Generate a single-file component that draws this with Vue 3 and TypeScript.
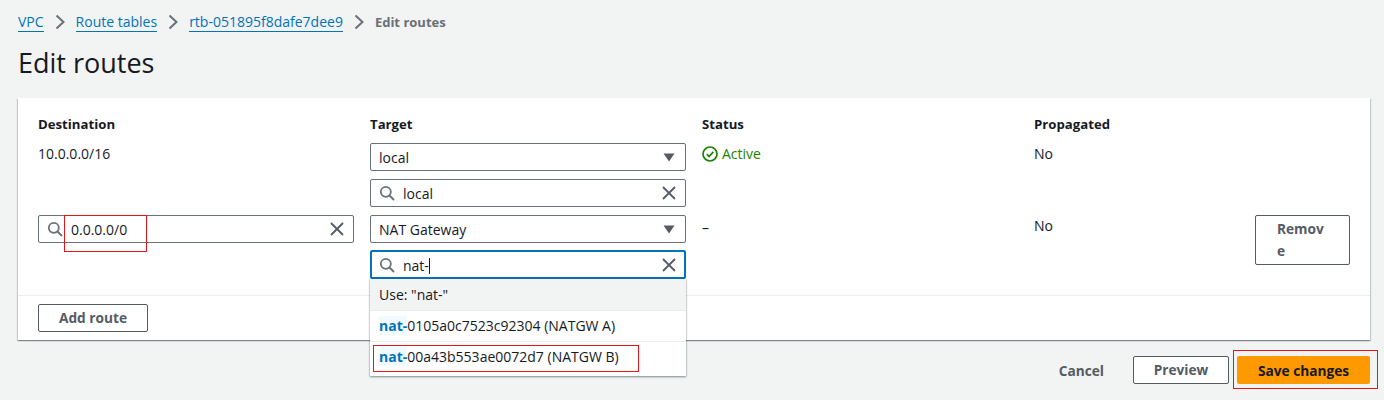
<script setup lang="ts">
interface Crumb {
  label: string;
}

interface NatOption {
  id: string;
  name: string;
  marked: boolean;
}

const crumbs: Crumb[] = [
  { label: 'VPC' },
  { label: 'Route tables' },
  { label: 'rtb-051895f8dafe7dee9' },
];

const columns = ['Destination', 'Target', 'Status', 'Propagated'];

const natOptions: NatOption[] = [
  { id: '0105a0c7523c92304', name: 'NATGW A', marked: false },
  { id: '00a43b553ae0072d7', name: 'NATGW B', marked: true },
];
</script>

<template>
  <div class="page">
    <nav class="crumbs">
      <template v-for="crumb in crumbs" :key="crumb.label">
        <a class="crumb">{{ crumb.label }}</a>
        <svg class="chevron" viewBox="0 0 16 16"><path d="M4.5 1.5 11.5 8 4.5 14.5" /></svg>
      </template>
      <span class="crumb-current">Edit routes</span>
    </nav>

    <h1 class="title">Edit routes</h1>

    <section class="card">
      <div class="table">
        <div v-for="col in columns" :key="col" class="head">{{ col }}</div>

        <!-- local route -->
        <div class="cell text">10.0.0.0/16</div>
        <div class="cell stack">
          <div class="field">
            <span class="value">local</span>
            <svg class="caret" viewBox="0 0 12 9"><path d="M0.5 0.5h11L6 8.5z" /></svg>
          </div>
          <div class="field">
            <svg class="search" viewBox="0 0 16 16"><circle cx="6.8" cy="6.8" r="5" /><path d="m10.5 10.5 4.5 4.5" /></svg>
            <span class="value">local</span>
            <svg class="clear" viewBox="0 0 14 14"><path d="m1 1 12 12M13 1 1 13" /></svg>
          </div>
        </div>
        <div class="cell status">
          <svg class="ok" viewBox="0 0 16 16"><circle cx="8" cy="8" r="7" /><path d="m4.8 8.2 2.3 2.3 4.2-4.6" /></svg>
          <span>Active</span>
        </div>
        <div class="cell text">No</div>

        <!-- new route -->
        <div class="cell second">
          <div class="field dest">
            <svg class="search" viewBox="0 0 16 16"><circle cx="6.8" cy="6.8" r="5" /><path d="m10.5 10.5 4.5 4.5" /></svg>
            <span class="value">0.0.0.0/0</span>
            <svg class="clear" viewBox="0 0 14 14"><path d="m1 1 12 12M13 1 1 13" /></svg>
            <i class="mark mark-dest"></i>
          </div>
        </div>
        <div class="cell stack second target">
          <div class="field">
            <span class="value">NAT Gateway</span>
            <svg class="caret" viewBox="0 0 12 9"><path d="M0.5 0.5h11L6 8.5z" /></svg>
          </div>
          <div class="field focused">
            <svg class="search" viewBox="0 0 16 16"><circle cx="6.8" cy="6.8" r="5" /><path d="m10.5 10.5 4.5 4.5" /></svg>
            <span class="value">nat-<b class="cursor"></b></span>
            <svg class="clear" viewBox="0 0 14 14"><path d="m1 1 12 12M13 1 1 13" /></svg>
          </div>
          <ul class="dropdown">
            <li class="use">Use: "nat-"</li>
            <li v-for="opt in natOptions" :key="opt.id" class="option">
              <span class="match">nat-</span>{{ opt.id }} ({{ opt.name }})
              <i v-if="opt.marked" class="mark mark-option"></i>
            </li>
          </ul>
        </div>
        <div class="cell text second dash">–</div>
        <div class="cell text second last">
          <span>No</span>
          <button class="btn remove">Remove</button>
        </div>
      </div>

      <div class="card-foot">
        <button class="btn add">Add route</button>
      </div>
    </section>

    <div class="actions">
      <button class="link">Cancel</button>
      <button class="btn preview">Preview</button>
      <button class="save">Save changes<i class="mark mark-save"></i></button>
    </div>
  </div>
</template>

<style>
html,
body {
  margin: 0;
  background: #f2f3f3;
}
</style>

<style scoped>
.page {
  box-sizing: border-box;
  width: 1384px;
  height: 400px;
  overflow: hidden;
  padding: 12px 14px 0 18px;
  background: #f2f3f3;
  color: #16191f;
  font-family: "Open Sans", "Noto Sans", sans-serif;
  font-size: 14px;
  line-height: 20px;
}

.crumbs {
  display: flex;
  align-items: center;
  height: 20px;
  font-size: 14px;
}

.crumb {
  color: #0073bb;
  border-bottom: 1px solid #0073bb;
  line-height: 18px;
}

.chevron {
  width: 16px;
  height: 16px;
  margin: 0 8px;
  fill: none;
  stroke: #687078;
  stroke-width: 2;
}

.crumb-current {
  color: #687078;
  font-weight: 700;
  font-size: 13px;
}

.title {
  margin: 13px 0 0;
  font-size: 27px;
  line-height: 36px;
  font-weight: 400;
}

.card {
  position: relative;
  margin-top: 17px;
  height: 242px;
  background: #fff;
  box-shadow: 0 1px 1px 0 rgba(0, 28, 36, 0.3), 1px 1px 1px 0 rgba(0, 28, 36, 0.15), -1px 1px 1px 0 rgba(0, 28, 36, 0.15);
  display: flex;
  flex-direction: column;
}

.table {
  display: grid;
  grid-template-columns: 332px 332px 332px 316px;
  grid-template-rows: 20px 81px auto;
  padding: 16px 20px 0;
  height: 197px;
  box-sizing: border-box;
}

.head {
  font-weight: 700;
  font-size: 13.2px;
}

.cell {
  padding-top: 9px;
}

.text {
  padding-top: 10px;
}

.stack {
  display: flex;
  flex-direction: column;
  gap: 8px;
}

.second {
  padding-top: 0;
}

.second.text {
  padding-top: 1px;
}

.second.dash {
  padding-top: 3px;
}

.target {
  position: relative;
  gap: 7px;
}

.field {
  position: relative;
  box-sizing: border-box;
  display: flex;
  align-items: center;
  width: 316px;
  height: 28px;
  padding: 0 9px 0 8px;
  background: #fff;
  border: 1px solid #687078;
  border-radius: 2px;
}

.value {
  flex: 1;
  position: relative;
  top: 1px;
}

.caret {
  width: 12px;
  height: 9px;
  margin-right: 1px;
  fill: #545b64;
}

.search {
  width: 16px;
  height: 16px;
  margin-right: 8px;
  flex: none;
  fill: none;
  stroke: #687078;
  stroke-width: 1.8;
}

.clear {
  width: 14px;
  height: 14px;
  flex: none;
  fill: none;
  stroke: #545b64;
  stroke-width: 1.8;
}

.focused {
  height: 29px;
  border: 2px solid #0073bb;
  padding: 0 8px 0 7px;
}

.cursor {
  display: inline-block;
  width: 1px;
  height: 16px;
  background: #16191f;
  vertical-align: -3px;
}

.status {
  display: flex;
  align-items: flex-start;
  gap: 4px;
  color: #1d8102;
  padding-top: 10px;
  height: 20px;
}

.ok {
  width: 16px;
  height: 16px;
  margin-top: 2px;
  fill: none;
  stroke: #1d8102;
  stroke-width: 1.7;
}

.last {
  display: flex;
  justify-content: space-between;
  align-items: flex-start;
}

.second.last {
  padding-top: 0;
}

.second.last span {
  padding-top: 1px;
}

.btn {
  box-sizing: border-box;
  background: #fff;
  border: 1px solid #545b64;
  border-radius: 2px;
  color: #545b64;
  font-family: inherit;
  font-weight: 700;
  font-size: 13.7px;
  line-height: 22px;
  padding: 0;
}

.remove {
  width: 95px;
  height: 50px;
  padding: 2px 24px 2px 21px;
  text-align: left;
  word-break: break-all;
}

.dropdown {
  position: absolute;
  z-index: 2;
  left: 0;
  top: 64px;
  width: 316px;
  height: 97px;
  margin: 0;
  padding: 0;
  list-style: none;
  background: #fff;
  box-shadow: 0 1px 2px 0 rgba(0, 28, 36, 0.45), 0 0 1px 0 rgba(0, 28, 36, 0.3);
}

.use {
  height: 31px;
  line-height: 31px;
  padding-left: 9px;
  background: #f2f3f3;
}

.option {
  position: relative;
  height: 31px;
  line-height: 30px;
  padding-left: 9px;
  border-top: 1px solid #eaeded;
  box-sizing: border-box;
  white-space: nowrap;
}

.option:last-child {
  height: 35px;
}

.match {
  color: #0073bb;
  font-weight: 700;
  background: #f1faff;
}

.card-foot {
  border-top: 1px solid #eaeded;
  padding: 8px 20px 0;
}

.add {
  display: block;
  width: 110px;
  height: 28px;
}

.actions {
  display: flex;
  justify-content: flex-end;
  align-items: center;
  margin-top: 16px;
  gap: 8px;
}

.link {
  margin-right: 21px;
  border: 0;
  padding: 0;
  background: none;
  color: #545b64;
  font-family: inherit;
  font-weight: 700;
  font-size: 13.7px;
}

.preview {
  width: 96px;
  height: 28px;
}

.save {
  position: relative;
  box-sizing: border-box;
  width: 133px;
  height: 28px;
  border: 0;
  border-radius: 2px;
  padding: 0;
  background: #ff9900;
  color: #16191f;
  font-family: inherit;
  font-weight: 700;
  font-size: 13.7px;
}

.mark {
  position: absolute;
  border: 1px solid #e8141c;
  pointer-events: none;
  box-sizing: border-box;
}

.mark-dest {
  left: 25px;
  top: -1px;
  width: 83px;
  height: 37px;
}

.mark-option {
  left: 3px;
  top: 3px;
  width: 266px;
  height: 27px;
}

.mark-save {
  left: -4px;
  top: -6px;
  width: 145px;
  height: 39px;
}
</style>
